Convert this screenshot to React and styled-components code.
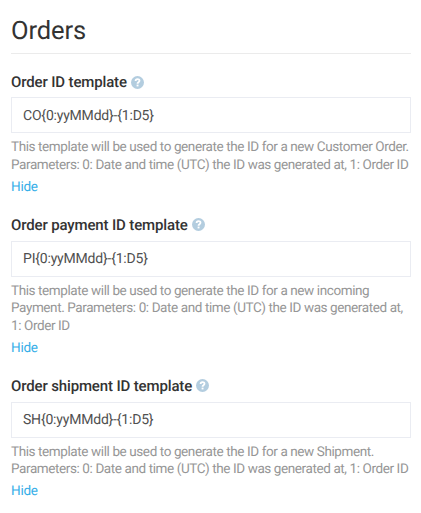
import React from "react";
import styled, { createGlobalStyle } from "styled-components";

const GlobalStyle = createGlobalStyle`
  * { box-sizing: border-box; }
  body {
    margin: 0;
    background: #fff;
    font-family: Roboto, "Liberation Sans", sans-serif;
    text-rendering: geometricPrecision;
  }
`;

const Page = styled.main`
  width: 421px;
  height: 513px;
  padding: 12px 10px 0 11px;
  overflow: hidden;
`;

const Title = styled.h1`
  margin: 0 0 19px;
  height: 42px;
  border-bottom: 1px solid #ebebeb;
  font-size: 25.5px;
  line-height: 38px;
  font-weight: 400;
  letter-spacing: -0.1px;
  color: #333;
`;

const Field = styled.section`
  margin-bottom: 19.6px;
`;

const LabelRow = styled.div`
  display: flex;
  align-items: center;
  gap: 4px;
  height: 18px;
  margin-bottom: 6.9px;

  section:first-of-type > & {
    margin-bottom: 6px;
  }
`;

const Label = styled.label`
  font-size: 15px;
  line-height: 18px;
  font-weight: 500;
  letter-spacing: -0.14px;
  color: #333;
`;

const HelpIcon = styled.svg`
  width: 13px;
  height: 13px;
`;

const Input = styled.input`
  display: block;
  width: 100%;
  height: 36px;
  padding: 1px 11px 0;
  border: 1px solid #eaecf2;
  border-radius: 0;
  outline: none;
  background: #fff;
  font: 400 14px Roboto, sans-serif;
  letter-spacing: -0.2px;
  text-rendering: geometricPrecision;
  color: #505050;
`;

const Description = styled.p`
  margin: 6px 0 0;
  font-size: 13.5px;
  line-height: 17.55px;
  letter-spacing: -0.4px;
  color: #969696;
  white-space: pre;
`;

const HideLink = styled.a`
  display: block;
  margin-top: 4.5px;
  font-size: 13.5px;
  line-height: 17.55px;
  letter-spacing: -0.25px;
  color: #35aee8;
  cursor: pointer;
`;

const fields = [
  {
    id: "order",
    label: "Order ID template",
    value: "CO{0:yyMMdd}-{1:D5}",
    text: "This template will be used to generate the ID for a new Customer Order.\nParameters: 0: Date and time (UTC) the ID was generated at, 1: Order ID",
  },
  {
    id: "payment",
    label: "Order payment ID template",
    value: "PI{0:yyMMdd}-{1:D5}",
    text: "This template will be used to generate the ID for a new incoming\nPayment. Parameters: 0: Date and time (UTC) the ID was generated at,\n1: Order ID",
  },
  {
    id: "shipment",
    label: "Order shipment ID template",
    value: "SH{0:yyMMdd}-{1:D5}",
    text: "This template will be used to generate the ID for a new Shipment.\nParameters: 0: Date and time (UTC) the ID was generated at, 1: Order ID",
  },
];

function Help() {
  return (
    <HelpIcon viewBox="0 0 13 13" aria-hidden="true">
      <circle cx="6.5" cy="6.5" r="6.5" fill="#b3cddf" />
      <path d="M4.6 4.9C4.6 2.5 8.5 2.5 8.5 4.8C8.5 6.2 6.5 6.2 6.5 7.7" fill="none" stroke="#fff" strokeWidth="1.8" />
      <rect x="5.6" y="8.6" width="1.9" height="1.8" fill="#fff" />
    </HelpIcon>
  );
}

export default function App() {
  return (
    <Page>
      <GlobalStyle />
      <Title>Orders</Title>
      {fields.map((f) => (
        <Field key={f.id}>
          <LabelRow>
            <Label htmlFor={f.id}>{f.label}</Label>
            <Help />
          </LabelRow>
          <Input id={f.id} defaultValue={f.value} />
          <Description>{f.text}</Description>
          <HideLink>Hide</HideLink>
        </Field>
      ))}
    </Page>
  );
}
